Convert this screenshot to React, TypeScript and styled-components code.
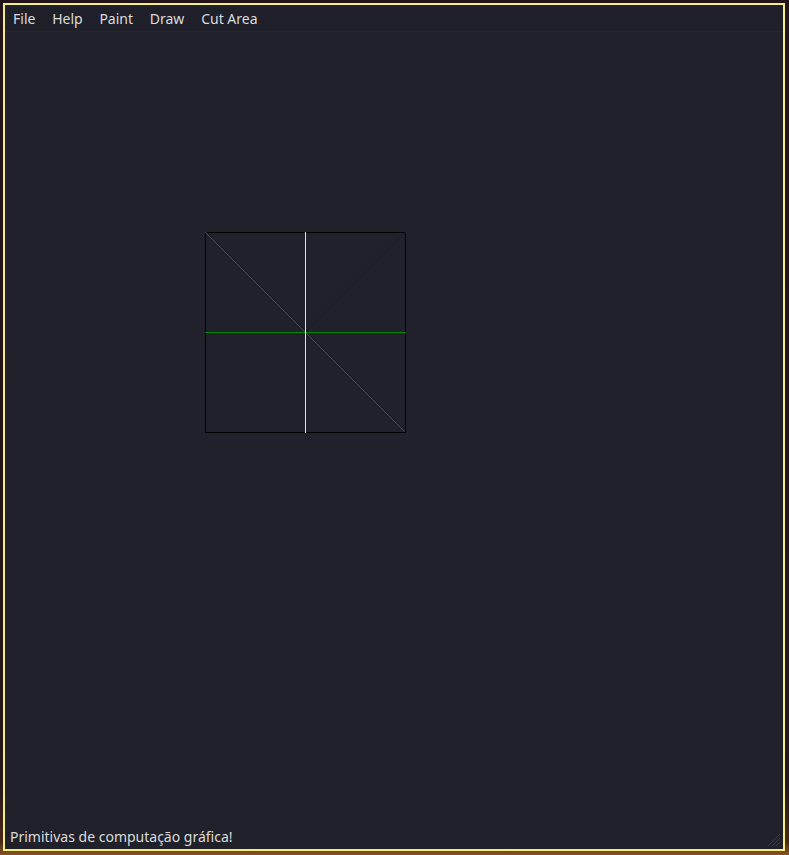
import React from "react";
import styled, { createGlobalStyle } from "styled-components";

const Global = createGlobalStyle`
  html, body { margin: 0; padding: 0; }
  body {
    width: 789px;
    height: 855px;
    overflow: hidden;
    background: linear-gradient(180deg, #22141a 0%, #24161a 92%, #4a2a16 98.5%, #8a5224 100%);
    font-family: "Noto Sans", "Open Sans", sans-serif;
  }
`;

const Desktop = styled.div`
  width: 789px;
  height: 855px;
  padding: 3px 4px 4px 3px;
  box-sizing: border-box;
  display: flex;
`;

const Window = styled.div`
  flex: 1;
  border: 2px solid #f4ef7a;
  background: #20212a;
  display: flex;
  flex-direction: column;
  min-height: 0;
`;

const MenuBar = styled.div`
  height: 27px;
  display: flex;
  align-items: center;
  padding-top: 1px;
  background: #1f2029;
  border-bottom: 1px solid #24252e;
  box-sizing: border-box;
`;

const MenuItem = styled.span`
  color: #dcdcdc;
  font-size: 14px;
  padding: 0 8px;
  margin-right: 0.75px;
  line-height: 20px;
`;

const Canvas = styled.div`
  flex: 1;
  position: relative;
  min-height: 0;
`;

const StatusBar = styled.div`
  height: 24px;
  display: flex;
  align-items: center;
  justify-content: space-between;
  padding-left: 5px;
`;

const StatusText = styled.span`
  color: #dcdcdc;
  font-size: 14px;
  line-height: 20px;
`;

const Grip = styled.svg`
  width: 16px;
  height: 16px;
  align-self: flex-end;
  margin-right: 2px;
  margin-bottom: 2px;
`;

export default function App() {
  const x0 = 200;
  const y0 = 200;
  const s = 200;
  return (
    <>
      <Global />
      <Desktop>
        <Window>
          <MenuBar>
            <MenuItem>File</MenuItem>
            <MenuItem>Help</MenuItem>
            <MenuItem>Paint</MenuItem>
            <MenuItem>Draw</MenuItem>
            <MenuItem>Cut Area</MenuItem>
          </MenuBar>
          <Canvas>
            <svg width="100%" height="100%" style={{ display: "block" }}>
              <rect
                x={x0 + 0.5}
                y={y0 + 0.5}
                width={s}
                height={s}
                fill="none"
                stroke="#000000"
                strokeWidth={1}
                shapeRendering="crispEdges"
              />
              <line
                x1={x0 + 0.5}
                y1={y0 + 0.5}
                x2={x0 + s + 0.5}
                y2={y0 + s + 0.5}
                stroke="#ff0000"
                strokeWidth={1}
                shapeRendering="crispEdges"
              />
              <line
                x1={x0 + s / 2 + 0.5}
                y1={y0 + s / 2 + 0.5}
                x2={x0 + s + 0.5}
                y2={y0 + 0.5}
                stroke="#0000ff"
                strokeWidth={1}
                shapeRendering="crispEdges"
              />
              <line
                x1={x0}
                y1={y0 + s / 2 + 0.5}
                x2={x0 + s + 1}
                y2={y0 + s / 2 + 0.5}
                stroke="#008800"
                strokeWidth={1}
                shapeRendering="crispEdges"
              />
              <line
                x1={x0 + s / 2 + 0.5}
                y1={y0}
                x2={x0 + s / 2 + 0.5}
                y2={y0 + s + 1}
                stroke="#ffff00"
                strokeWidth={1}
                shapeRendering="crispEdges"
              />
            </svg>
          </Canvas>
          <StatusBar>
            <StatusText>Primitivas de computação gráfica!</StatusText>
            <Grip viewBox="0 0 16 16">
              <line x1="15" y1="3" x2="3" y2="15" stroke="#3a3b44" strokeWidth="1" />
              <line x1="15" y1="7" x2="7" y2="15" stroke="#3a3b44" strokeWidth="1" />
              <line x1="15" y1="11" x2="11" y2="15" stroke="#3a3b44" strokeWidth="1" />
            </Grip>
          </StatusBar>
        </Window>
      </Desktop>
    </>
  );
}
